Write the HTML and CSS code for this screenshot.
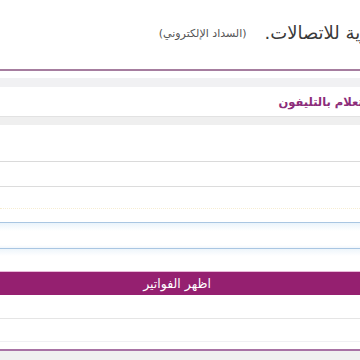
FILE: index.html
```html
<!DOCTYPE html>
<html lang="ar" dir="rtl">
<head>
<meta charset="utf-8">
<link rel="stylesheet" href="styles.css">
</head>
<body>
<div class="page">
  <header class="header">
    <span class="brand">الشركة المصرية للاتصالات.</span>
    <span class="sub">(السداد الإلكتروني)</span>
  </header>
  <div class="gap7"></div>
  <div class="band"></div>
  <div class="label-row"><span class="label">الاستعلام بالتليفون</span></div>
  <div class="band2"></div>
  <div class="row r1"></div>
  <div class="row r2"></div>
  <div class="row r3"><div class="dots"></div></div>
  <div class="row r4"></div>
  <div class="glow"></div>
  <div class="btn">اظهر الفواتير</div>
  <div class="row r5"></div>
  <div class="row r6"></div>
  <div class="row r7"></div>
  <div class="footer"></div>
</div>
</body>
</html>
```
FILE: styles.css
```css
html, body {
  margin: 0;
  padding: 0;
  background: #ffffff;
  overflow: hidden;
}
.page {
  width: 360px;
  font-family: "DejaVu Sans", "Noto Sans", sans-serif;
  direction: rtl;
}
.header {
  height: 71px;
  border-bottom: 2px solid #a67d9f;
  display: flex;
  align-items: flex-start;
  padding-top: 23px;
  box-sizing: border-box;
  margin-right: -107px;
  white-space: nowrap;
}
.brand {
  font-size: 18px;
  color: #3a3a3a;
  line-height: 20px;
}
.sub {
  font-size: 11px;
  color: #555;
  margin-right: 18px;
  line-height: 20px;
  margin-top: 1px;
}
.gap7 { height: 7px; }
.band { height: 9px; background: #f1f1f3; }
.label-row {
  height: 30px;
  border-bottom: 1px solid #e2e2e2;
  display: flex;
  align-items: center;
  margin-right: -27px;
  white-space: nowrap;
  box-sizing: border-box;
}
.label {
  font-size: 11.5px;
  font-weight: bold;
  color: #8c2c7a;
}
.band2 { height: 8px; background: #efefef; }
.row { box-sizing: border-box; }
.r1 { height: 37px; border-bottom: 1px solid #dadada; }
.r2 { height: 25px; border-bottom: 1px solid #dcdcdc; }
.r3 { height: 36px; border-bottom: 1px solid #a9c6e2; padding-top: 21px; }
.dots {
  border-top: 1px dotted #f6edd2;
}
.r4 {
  height: 26px;
  border-bottom: 1px solid #a9c6e2;
  background: linear-gradient(#eaf3fb, #ffffff 8px, #ffffff 22px, #f1f6fb);
}
.glow {
  height: 22px;
  background: linear-gradient(#eef5fb, #ffffff 7px);
}
.btn {
  height: 23px;
  border-top: 1px solid #e9b9d8;
  background: #952070;
  color: #ffffff;
  font-size: 12.5px;
  display: flex;
  align-items: center;
  justify-content: center;
  padding-right: 6px;
}
.r5 { height: 24px; border-bottom: 1px solid #e5e5e5; }
.r6 { height: 23px; border-bottom: 1px solid #f0f0f4; }
.r7 { height: 9px; border-bottom: 2px solid #a873a5; }
.footer { height: 10px; background: #f0f0f0; }
```
